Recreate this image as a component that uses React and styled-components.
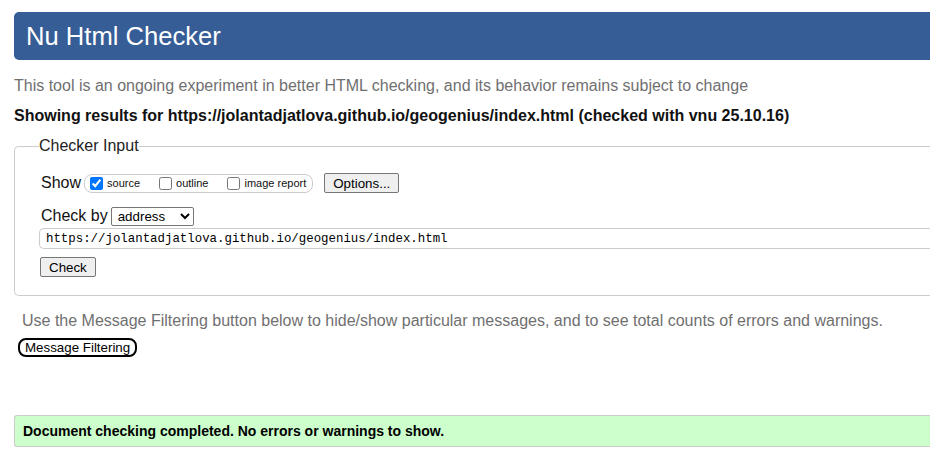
import styled, { createGlobalStyle } from "styled-components";

const Global = createGlobalStyle`
    html, body {
        margin: 0;
        padding: 0;
        overflow: hidden;
        background: #fff;
    }
    body {
        font-family: "Liberation Sans", Arial, sans-serif;
        color: #000;
    }
`

function App() {
    return (
        <>
            <Global />
            <Page>
                <Header>Nu Html Checker</Header>
                <Intro>This tool is an ongoing experiment in better HTML checking, and its behavior remains subject to change</Intro>
                <Results>Showing results for https://jolantadjatlova.github.io/geogenius/index.html (checked with vnu 25.10.16)</Results>
                <Fieldset>
                    <Legend>Checker Input</Legend>
                    <Row>
                        <FieldLabel>Show</FieldLabel>
                        <Group>
                            <Option><input type="checkbox" defaultChecked />source</Option>
                            <Option><input type="checkbox" />outline</Option>
                            <Option><input type="checkbox" />image report</Option>
                        </Group>
                        <Button $ml={11}>Options...</Button>
                    </Row>
                    <Row $mt={13}>
                        <FieldLabel>Check by</FieldLabel>
                        <Select defaultValue="address">
                            <option value="address">address</option>
                            <option value="upload">file upload</option>
                            <option value="text">text input</option>
                        </Select>
                    </Row>
                    <UrlInput defaultValue="https://jolantadjatlova.github.io/geogenius/index.html" />
                    <Button $mt={8}>Check</Button>
                </Fieldset>
                <Hint>Use the Message Filtering button below to hide/show particular messages, and to see total counts of errors and warnings.</Hint>
                <FilterButton>Message Filtering</FilterButton>
                <Success>Document checking completed. No errors or warnings to show.</Success>
            </Page>
        </>
    )
}

export default App;


const Page = styled.div`
    width: 1000px;
    padding: 12px 0 20px 14px;
    display: flex;
    flex-direction: column;
    align-items: flex-start;
`
const Header = styled.h1`
    align-self: stretch;
    margin: 0;
    height: 48px;
    line-height: 48px;
    padding-left: 12px;
    background: #365d96;
    color: #fff;
    font-size: 25.6px;
    font-weight: normal;
    border-radius: 5px 0 0 5px;
`
const Intro = styled.p`
    margin: 17px 0 0;
    font-size: 16px;
    line-height: 18px;
    color: #707070;
`
const Results = styled.p`
    margin: 12px 0 0;
    font-size: 16px;
    line-height: 18px;
    font-weight: bold;
    color: #111;
`
const Fieldset = styled.fieldset`
    align-self: stretch;
    margin: 12px 0 0;
    padding: 18px 0 18px 25px;
    border: 1px solid #ccc;
    border-right: none;
    border-radius: 5px 0 0 5px;
    display: flex;
    flex-direction: column;
    align-items: flex-start;
`
const Legend = styled.legend`
    padding: 0;
    margin-left: -1px;
    font-size: 16px;
    line-height: 18px;
    color: #222;
`
const Row = styled.div`
    display: flex;
    align-items: center;
    height: 20px;
    margin-top: ${p => p.$mt || 0}px;
`
const FieldLabel = styled.span`
    font-size: 16px;
    margin: 0 3px 0 1px;
    color: #111;
`
const Group = styled.div`
    display: flex;
    align-items: center;
    height: 17px;
    padding: 0 6px 0 5px;
    border: 1px solid #ccc;
    border-radius: 8px;
    gap: 19px;
`
const Option = styled.label`
    display: flex;
    align-items: center;
    font-size: 11px;
    color: #111;
    input {
        margin: 0 4px 0 0;
        width: 13px;
        height: 13px;
    }
`
const Button = styled.button`
    margin: ${p => p.$mt || 0}px 0 0 ${p => p.$ml || 0}px;
    padding: 1px 8px;
    height: 20px;
    font-family: "Liberation Sans", Arial, sans-serif;
    font-size: 13.33px;
    color: #000;
    background: #efefef;
    border: 1px solid #767676;
    border-radius: 2px;
`
const Select = styled.select`
    width: 83px;
    height: 19px;
    padding: 0 2px;
    font-family: "Liberation Sans", Arial, sans-serif;
    font-size: 13.33px;
    color: #000;
    background: #fff;
    border: 1px solid #767676;
    border-radius: 2px;
`
const UrlInput = styled.input`
    align-self: stretch;
    box-sizing: border-box;
    margin: 2px 0 0 -1px;
    height: 21px;
    padding: 0 6px;
    font-family: "Liberation Mono", "DejaVu Sans Mono", monospace;
    font-size: 12.4px;
    color: #000;
    border: 1px solid #ccc;
    border-right: none;
    border-radius: 5px 0 0 5px;
    outline: none;
`
const Hint = styled.p`
    margin: 16px 0 0 8px;
    font-size: 16px;
    line-height: 18px;
    color: #707070;
`
const FilterButton = styled.button`
    margin: 8px 0 0 4px;
    height: 19px;
    padding: 0 5px;
    font-family: "Liberation Sans", Arial, sans-serif;
    font-size: 13.33px;
    color: #000;
    background: #fff;
    border: 2px solid #000;
    border-radius: 8px;
`
const Success = styled.div`
    align-self: stretch;
    margin-top: 58px;
    height: 30px;
    line-height: 30px;
    padding-left: 8px;
    font-size: 14px;
    font-weight: bold;
    color: #000;
    background: #ccffcc;
    border: 1px solid #ccc;
    border-right: none;
    border-radius: 3px 0 0 3px;
`
